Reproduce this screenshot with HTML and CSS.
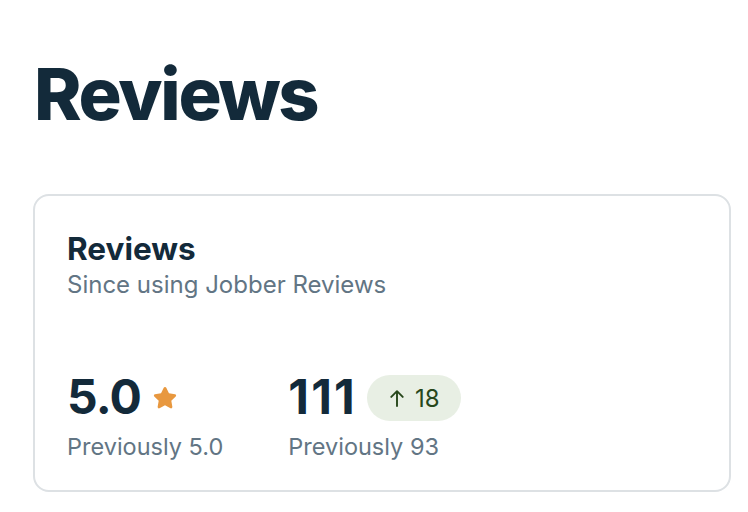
FILE: index.html
```html
<!DOCTYPE html>
<html>
<head>
<meta charset="utf-8">
<link rel="stylesheet" href="styles.css">
</head>
<body>
<main class="page">
  <h1 class="page-title">Reviews</h1>
  <section class="card">
    <h2 class="card-title">Reviews</h2>
    <p class="card-sub">Since using Jobber Reviews</p>
    <div class="stats">
      <div class="stat">
        <div class="stat-main">
          <span class="stat-value">5.0</span>
          <svg class="star" width="28" height="28" viewBox="0 0 24 24"><path d="M12 2.6c.5 0 .9.3 1.1.7l2.3 4.7 5.2.8c.9.1 1.3 1.3.6 1.9l-3.8 3.7.9 5.2c.2.9-.8 1.6-1.6 1.2L12 18.3l-4.7 2.5c-.8.4-1.8-.3-1.6-1.2l.9-5.2-3.8-3.7c-.7-.6-.3-1.8.6-1.9l5.2-.8 2.3-4.7c.2-.4.6-.7 1.1-.7z" fill="#e8983f"/></svg>
        </div>
        <div class="stat-prev">Previously 5.0</div>
      </div>
      <div class="stat">
        <div class="stat-main">
          <span class="stat-value stat-value-wide">111</span>
          <span class="badge"><svg class="arrow" width="14" height="18" viewBox="0 0 14 18"><path d="M7 17V2.2M1.3 7.9L7 2.2l5.7 5.7" fill="none" stroke="#27471b" stroke-width="1.9" stroke-linecap="round" stroke-linejoin="round"/></svg>18</span>
        </div>
        <div class="stat-prev">Previously 93</div>
      </div>
    </div>
  </section>
</main>
</body>
</html>
```

FILE: styles.css
```css
* { box-sizing: border-box; }
html, body { margin: 0; padding: 0; background: #fff; }
body {
  font-family: Inter, "Noto Sans", sans-serif;
  color: #132a3a;
}
.page {
  padding: 54px 17px 0 33px;
}
.page-title {
  margin: 0 0 0 1px;
  font-size: 72px;
  line-height: 80px;
  font-weight: 800;
  letter-spacing: -2.3px;
  color: #132a3a;
}
.card {
  margin-top: 60px;
  width: 698px;
  height: 298px;
  border: 2px solid #dde1e4;
  border-radius: 16px;
  padding: 33px 32px 0 32px;
}
.card-title {
  margin: 0;
  font-size: 31.5px;
  line-height: 40px;
  font-weight: 700;
  color: #132a3a;
}
.card-sub {
  margin: 1px 0 0;
  font-size: 24px;
  line-height: 30px;
  color: #627584;
}
.stats {
  display: flex;
  gap: 65px;
  margin-top: 71px;
}
.stat { display: flex; flex-direction: column; }
.stat-main {
  display: flex;
  align-items: center;
  gap: 10px;
  height: 52px;
}
.stat-value {
  font-size: 48px;
  font-weight: 700;
  line-height: 52px;
  letter-spacing: -0.8px;
  color: #132a3a;
}
.stat-value-wide { letter-spacing: 2.2px; margin-right: 0; }
.star { margin-top: 2px; }
.badge {
  display: inline-flex;
  align-items: center;
  gap: 11px;
  height: 46px;
  padding: 0 21px 0 23px;
  border-radius: 23px;
  background: #e8efe4;
  color: #27471b;
  font-size: 24px;
  margin-top: 2px;
}
.stat-prev {
  margin-top: 9px;
  font-size: 23.5px;
  line-height: 30px;
  color: #627584;
}
```
